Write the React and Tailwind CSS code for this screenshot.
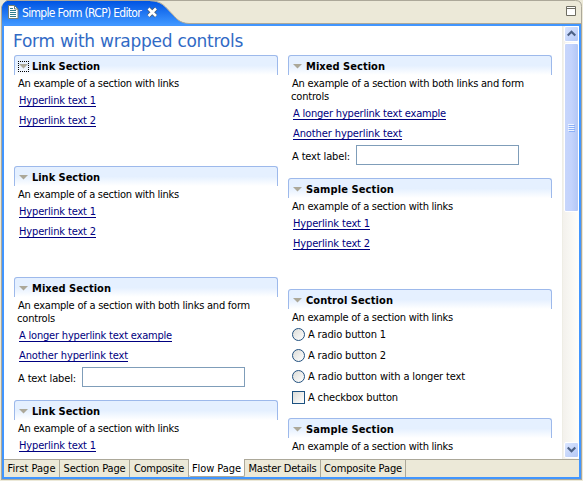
import { useLayoutEffect, useRef, useState } from "react";

/* Single line of text, tracked so that it spans exactly w pixels. */
function T({ w, className = "", children }) {
  const ref = useRef(null);
  const [ls, setLs] = useState(0);
  useLayoutEffect(() => {
    const natural = ref.current.getBoundingClientRect().width;
    setLs((w - natural) / children.length);
  }, []);
  return (
    <span ref={ref} className={`inline-block whitespace-pre ${className}`} style={{ letterSpacing: `${ls}px` }}>
      {children}
    </span>
  );
}

function Header({ title, w, focused }) {
  return (
    <div className="flex h-5 items-center rounded-t-[3px] border-x border-t border-[#9db9eb] bg-linear-to-b from-[#e5f0ff] from-50% to-white pt-px pl-[3px]">
      <span className={`flex h-[11px] w-[11px] items-center justify-center ${focused ? "border border-dotted border-black" : ""}`}>
        <svg width="9" height="5" viewBox="0 0 9 5" className="shrink-0">
          <path d="M0 0h9L4.5 4.5z" fill="#aca899" />
        </svg>
      </span>
      <T w={w} className="ml-[3px] pt-px text-[11px] leading-[13px] font-bold">{title}</T>
    </div>
  );
}

function Section({ title, w, h, focused, children }) {
  return (
    <section className={`w-[264px] shrink-0 ${h}`}>
      <Header title={title} w={w} focused={focused} />
      <div className="pt-0.5 pl-[3px] leading-[13px]">{children}</div>
    </section>
  );
}

function Link({ w, first, children }) {
  return (
    <div className={`h-[13px] pl-[2px] ${first ? "mt-[4px]" : "mt-[7px]"}`}>
      <a className="inline-block h-[13px] border-b border-[#000080] text-[#000080]">
        <T w={w}>{children}</T>
      </a>
    </div>
  );
}

const Desc = () => <div className="h-[13px] pl-px"><T w={161}>An example of a section with links</T></div>;

const LinkSection = ({ title = "Link Section", w = 68, focused, cut }) => (
  <Section title={title} w={w} h={cut ? "h-[60px]" : "h-[111px]"} focused={focused}>
    <Desc />
    <Link w={77} first>Hyperlink text 1</Link>
    {!cut && <Link w={77}>Hyperlink text 2</Link>}
  </Section>
);

const MixedSection = () => (
  <Section title="Mixed Section" w={79} h="h-[123px]">
    <div className="h-[13px] pl-px"><T w={232}>An example of a section with both links and form</T></div>
    <div className="h-[13px]"><T w={38}>controls</T></div>
    <Link w={153} first>A longer hyperlink text example</Link>
    <Link w={109}>Another hyperlink text</Link>
    <div className="mt-[5px] flex items-center pl-px">
      <T w={58} className="pt-0.5">A text label:</T>
      <div className="ml-[6px] h-5 w-[163px] border border-[#7f9db9] bg-white" />
    </div>
  </Section>
);

function Radio({ w, children }) {
  return (
    <div className="flex h-[21px] items-center">
      <span className="h-[13px] w-[13px] rounded-full border border-[#21507f] bg-linear-to-br from-[#dcdcd7] to-white" />
      <T w={w} className="ml-[3px]">{children}</T>
    </div>
  );
}

const ControlSection = () => (
  <Section title="Control Section" w={87} h="h-[129px]">
    <Desc />
    <div className="pl-px">
      <Radio w={78}>A radio button 1</Radio>
      <Radio w={78}>A radio button 2</Radio>
      <Radio w={157}>A radio button with a longer text</Radio>
      <div className="flex h-[21px] items-center">
        <span className="h-[13px] w-[13px] border border-[#1c5180] bg-linear-to-br from-[#dcdcd7] to-white" />
        <T w={90} className="ml-[3px]">A checkbox button</T>
      </div>
    </div>
  </Section>
);

function TabBar() {
  return (
    <div className="relative h-6 shrink-0">
      <svg width="583" height="24" viewBox="0 0 583 24" className="absolute top-0 left-0">
        <defs>
          <linearGradient id="tab" x1="0" y1="0" x2="0" y2="1">
            <stop offset="0" stopColor="#0054e3" />
            <stop offset="1" stopColor="#3d95ff" />
          </linearGradient>
        </defs>
        <path d="M1.500 24V6.500l5-6H575.500q6 0 6 6V24" fill="none" stroke="#aca899" />
        <path d="M2 24V7l1-3 2-2 2-1H150c12 0 16 7 21 12s8 10 18 10.500V24z" fill="url(#tab)" />
        <path d="M150 .7c12 0 16 7 21 12s8 10.600 18 10.800H581" fill="none" stroke="#aca899" />
        <path d="M8.500 5.500h6l3.500 3.500v9.500h-9.500z" fill="#fff" stroke="#6f7f78" />
        <path d="M14.500 5.500v3.500h3.500" fill="none" stroke="#6f7f78" />
        <path d="M10 8.500h3M10 10.500h6M10 12.500h6M10 14.500h6M10 16.500h6" stroke="#2f7d8d" />
        <path d="M148.500 8.500l7.500 7.500M156 8.500l-7.500 7.500" stroke="#4a5a70" strokeWidth="4" />
        <path d="M148.500 8.500l7.500 7.500M156 8.500l-7.500 7.500" stroke="#fff" strokeWidth="2.600" />
        <path d="M566.500 6.500h9v9h-9zM566 8.500h10" fill="#fff" stroke="#6e6d62" />
      </svg>
      <T w={119} className="relative top-[6px] left-[22px] text-[12px] leading-[14px] text-white">Simple Form (RCP) Editor</T>
    </div>
  );
}

function ScrollButton({ down }) {
  return (
    <div className="flex h-4 w-[15px] items-center justify-center rounded-[2px] border border-white bg-linear-to-br from-[#dbe6ff] to-[#b4c8f6] pb-px">
      <svg width="9" height="7" viewBox="0 0 9 7" className={down ? "rotate-180" : ""}>
        <path d="M.7 5.500l3.800-3.800 3.800 3.800" fill="none" stroke="#4d6185" strokeWidth="2.200" />
      </svg>
    </div>
  );
}

function ScrollBar() {
  return (
    <div className="flex w-[17px] flex-col items-center border-l border-[#eeede5] bg-linear-to-r from-[#f3f1ec] to-[#fefefb] pb-px">
      <ScrollButton />
      <div className="mt-px flex h-[169px] w-[15px] flex-col items-center justify-center rounded-[2px] border border-white bg-linear-to-r from-[#c8d6fb] via-[#c3d3fd] to-[#b3c7f5]">
        <svg width="7" height="8" viewBox="0 0 7 8">
          <path d="M0 .5h6M0 2.500h6M0 4.500h6M0 6.500h6" stroke="#eef4fe" />
          <path d="M1 1.500h6M1 3.500h6M1 5.500h6M1 7.500h6" stroke="#8cb0f8" />
        </svg>
      </div>
      <div className="grow" />
      <ScrollButton down />
    </div>
  );
}

function PageTab({ w, box, selected, children }) {
  return (
    <div className={`flex justify-center border-r border-[#aca899] pt-[2px] leading-[14px] ${box} ${selected ? "-mt-px rounded-b-[2px] border-b bg-white pt-[3px]" : ""}`}>
      <T w={w}>{children}</T>
    </div>
  );
}

export default function App() {
  return (
    <div className="flex h-[481px] w-[583px] flex-col overflow-hidden bg-[#ece9d8] font-['DejaVu_Sans_Condensed','DejaVu_Sans',sans-serif] text-[11px] text-black">
      <TabBar />
      <div className="ml-px flex h-[456px] w-[581px] flex-col border-x border-b border-[#aca899]">
        <div className="flex min-h-0 grow flex-col border-2 border-[#4196ff]">
          <div className="flex h-[433px] shrink-0 overflow-hidden bg-white">
            <div className="flex h-full w-[558px] flex-col pl-[10px]">
              <h1 className="h-[29px] shrink-0 pt-[3px] font-['DejaVu_Sans',sans-serif] text-[17px] leading-6 text-[#316ac5]">
                <T w={230} className="-ml-px">Form with wrapped controls</T>
              </h1>
              <div className="flex gap-[10px]">
                <div className="flex flex-col">
                  <LinkSection focused />
                  <LinkSection />
                  <MixedSection />
                  <LinkSection cut />
                </div>
                <div className="flex flex-col">
                  <MixedSection />
                  <LinkSection title="Sample Section" w={88} />
                  <ControlSection />
                  <LinkSection title="Sample Section" w={88} cut />
                </div>
              </div>
            </div>
            <ScrollBar />
          </div>
          <div className="flex h-[18px] border-t border-[#aca899]">
            <PageTab w={48} box="w-[56px]">First Page</PageTab>
            <PageTab w={62} box="w-[70px]">Section Page</PageTab>
            <PageTab w={50} box="w-[59px]">Composite</PageTab>
            <PageTab w={49} box="w-[56px]" selected>Flow Page</PageTab>
            <PageTab w={68} box="w-[76px]">Master Details</PageTab>
            <PageTab w={78} box="w-[85px]">Composite Page</PageTab>
          </div>
        </div>
      </div>
    </div>
  );
}
